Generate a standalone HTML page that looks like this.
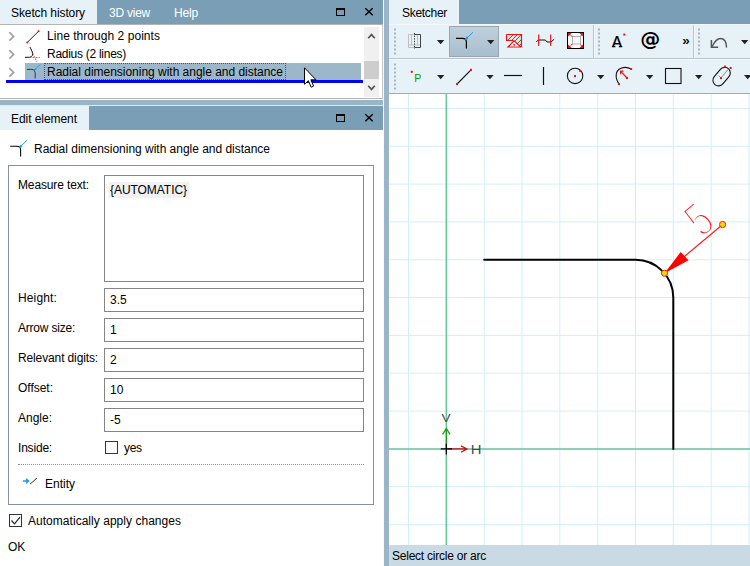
<!DOCTYPE html>
<html><head><meta charset="utf-8"><title>Sketcher</title>
<style>
html,body{margin:0;padding:0;}
body{background:#fff;}
#app{width:750px;height:566px;overflow:hidden;background:#9ab4c8;position:relative;font-family:"Liberation Sans",sans-serif;font-size:12px;}
.t{position:absolute;white-space:nowrap;line-height:16px;font-size:12px;height:16px;}
svg{position:absolute;left:0;top:0;}
</style></head><body><div id="app">
<div style="position:absolute;left:0px;top:0px;width:383px;height:100px;background:#fff;"></div>
<div style="position:absolute;left:0px;top:0px;width:383px;height:24px;background:#7a9eb6;"></div>
<div style="position:absolute;left:0px;top:0px;width:97px;height:24px;background:#e6f1f8;"></div>
<div style="position:absolute;left:0px;top:24px;width:383px;height:1px;background:#b4b4b4;"></div>
<div style="position:absolute;left:0px;top:98px;width:383px;height:1px;background:#b4b4b4;"></div>
<div style="position:absolute;left:382px;top:25px;width:1px;height:73px;background:#c8c8c8;"></div>
<div style="position:absolute;left:25px;top:63px;width:336px;height:17px;background:#9db7ca;"></div>
<div style="position:absolute;left:44px;top:63px;width:242px;height:17px;background:transparent;box-sizing:border-box;border:1px dotted #553;"></div>
<div style="position:absolute;left:6px;top:80px;width:357px;height:3px;background:#0303f3;"></div>
<div style="position:absolute;left:364px;top:27px;width:15px;height:70px;background:#f0f0f0;"></div>
<div style="position:absolute;left:364px;top:61px;width:15px;height:18px;background:#cdcdcd;"></div>
<div style="position:absolute;left:0px;top:105px;width:383px;height:461px;background:#fff;"></div>
<div style="position:absolute;left:0px;top:105px;width:383px;height:1px;background:#dfe8ee;"></div>
<div style="position:absolute;left:0px;top:106px;width:383px;height:24px;background:#7a9eb6;"></div>
<div style="position:absolute;left:0px;top:106px;width:89px;height:24px;background:#e6f1f8;"></div>
<div style="position:absolute;left:383px;top:0px;width:1px;height:566px;background:#f6f8fa;"></div>
<div style="position:absolute;left:8px;top:165px;width:366px;height:340px;background:transparent;box-sizing:border-box;border:1px solid #8a909a;"></div>
<div style="position:absolute;left:104px;top:175px;width:260px;height:107px;background:#fff;box-sizing:border-box;border:1px solid #858585;"></div>
<div style="position:absolute;left:109px;top:182px;width:80px;height:16px;background:#f1f1f1;"></div>
<div style="position:absolute;left:104px;top:288px;width:260px;height:24px;background:#fff;box-sizing:border-box;border:1px solid #858585;"></div>
<div style="position:absolute;left:104px;top:318px;width:260px;height:24px;background:#fff;box-sizing:border-box;border:1px solid #858585;"></div>
<div style="position:absolute;left:104px;top:348px;width:260px;height:24px;background:#fff;box-sizing:border-box;border:1px solid #858585;"></div>
<div style="position:absolute;left:104px;top:378px;width:260px;height:24px;background:#fff;box-sizing:border-box;border:1px solid #858585;"></div>
<div style="position:absolute;left:104px;top:408px;width:260px;height:24px;background:#fff;box-sizing:border-box;border:1px solid #858585;"></div>
<div style="position:absolute;left:105px;top:441px;width:13px;height:13px;background:#fff;box-sizing:border-box;border:1px solid #333;"></div>
<div style="position:absolute;left:18px;top:464px;width:346px;height:1px;background:transparent;border-top:1px dotted #8e8e8e;height:0;"></div>
<div style="position:absolute;left:9px;top:514px;width:13px;height:13px;background:#fff;box-sizing:border-box;border:1px solid #333;"></div>
<div style="position:absolute;left:389px;top:0px;width:361px;height:566px;background:#fff;"></div>
<div style="position:absolute;left:389px;top:0px;width:361px;height:24px;background:#7a9eb6;"></div>
<div style="position:absolute;left:389px;top:0px;width:70px;height:24px;background:#e6f1f8;"></div>
<div style="position:absolute;left:389px;top:24px;width:361px;height:69px;background:#e6f1f8;"></div>
<div style="position:absolute;left:389px;top:58px;width:361px;height:1px;background:#b9c4cc;"></div>
<div style="position:absolute;left:389px;top:59px;width:361px;height:1px;background:#f4f9fc;"></div>
<div style="position:absolute;left:389px;top:24px;width:361px;height:1px;background:#f1f7fb;"></div>
<div style="position:absolute;left:389px;top:93px;width:361px;height:1px;background:#a3a9ad;"></div>
<div style="position:absolute;left:449px;top:26px;width:50px;height:31px;background:linear-gradient(#bfd0db,#a8becd);box-sizing:border-box;border:1px solid #9aa7b0;"></div>
<div style="position:absolute;left:389px;top:545px;width:361px;height:21px;background:#c9dae5;"></div>
<svg width="750" height="566" viewBox="0 0 750 566">
<defs><mask id="thin5" maskUnits="userSpaceOnUse" x="-10" y="-45" width="60" height="60"><text x="0" y="0" font-family="'Liberation Sans', sans-serif" font-size="42" fill="#fff" stroke="#000" stroke-width="2.5">5</text></mask><clipPath id="cv"><rect x="389" y="94" width="361" height="451"/></clipPath></defs>
<g clip-path="url(#cv)">
<line x1="408.5" y1="94" x2="408.5" y2="545" stroke="#d2eff9" stroke-width="1"/>
<line x1="484.2" y1="94" x2="484.2" y2="545" stroke="#d2eff9" stroke-width="1"/>
<line x1="522.0" y1="94" x2="522.0" y2="545" stroke="#d2eff9" stroke-width="1"/>
<line x1="559.8" y1="94" x2="559.8" y2="545" stroke="#d2eff9" stroke-width="1"/>
<line x1="597.7" y1="94" x2="597.7" y2="545" stroke="#d2eff9" stroke-width="1"/>
<line x1="635.5" y1="94" x2="635.5" y2="545" stroke="#d2eff9" stroke-width="1"/>
<line x1="673.3" y1="94" x2="673.3" y2="545" stroke="#d2eff9" stroke-width="1"/>
<line x1="711.2" y1="94" x2="711.2" y2="545" stroke="#d2eff9" stroke-width="1"/>
<line x1="749.0" y1="94" x2="749.0" y2="545" stroke="#d2eff9" stroke-width="1"/>
<line x1="389" y1="108.4" x2="750" y2="108.4" stroke="#d2eff9" stroke-width="1"/>
<line x1="389" y1="146.3" x2="750" y2="146.3" stroke="#d2eff9" stroke-width="1"/>
<line x1="389" y1="184.1" x2="750" y2="184.1" stroke="#d2eff9" stroke-width="1"/>
<line x1="389" y1="221.9" x2="750" y2="221.9" stroke="#d2eff9" stroke-width="1"/>
<line x1="389" y1="259.8" x2="750" y2="259.8" stroke="#d2eff9" stroke-width="1"/>
<line x1="389" y1="297.6" x2="750" y2="297.6" stroke="#d2eff9" stroke-width="1"/>
<line x1="389" y1="335.4" x2="750" y2="335.4" stroke="#d2eff9" stroke-width="1"/>
<line x1="389" y1="373.2" x2="750" y2="373.2" stroke="#d2eff9" stroke-width="1"/>
<line x1="389" y1="411.1" x2="750" y2="411.1" stroke="#d2eff9" stroke-width="1"/>
<line x1="389" y1="486.7" x2="750" y2="486.7" stroke="#d2eff9" stroke-width="1"/>
<line x1="389" y1="524.6" x2="750" y2="524.6" stroke="#d2eff9" stroke-width="1"/>
<line x1="446.35" y1="94" x2="446.35" y2="545" stroke="#62c39c" stroke-width="1.5"/>
<line x1="389" y1="448.9" x2="750" y2="448.9" stroke="#62c39c" stroke-width="1.5"/>
<path d="M484.2 259.8 L635.5 259.8 A37.83 37.83 0 0 1 673.3 297.6 L673.3 448.9" fill="none" stroke="#000" stroke-width="2" stroke-linecap="round"/>
<path d="M446.35 447 V428.5 M442.6 434.3 L446.35 428.5 L450 434.3" fill="none" stroke="#18a018" stroke-width="1.3"/>
<path d="M448 448.9 H467 M461 445.8 L467 448.9 L461 452.2" fill="none" stroke="#c01818" stroke-width="1.3"/>
<path d="M440.8 448.9 H452 M446.35 443.7 V454.4" fill="none" stroke="#000" stroke-width="1.3"/>
<text transform="translate(441.6 422.2) scale(1.2 1)" font-family="'Liberation Sans', sans-serif" font-size="11.4" fill="#4a4a4a">V</text>
<text transform="translate(470.7 453.7) scale(1.2 1)" font-family="'Liberation Sans', sans-serif" font-size="12.4" fill="#4a4a4a">H</text>
<path d="M664.5 273.2 L722.6 224.5" stroke="#ff1a1a" stroke-width="1.2" fill="none"/>
<path d="M664.5 273.2 L680.7 252 L688.5 260.2 Z" fill="#ff0000"/>
<g transform="translate(702 238.4) rotate(-40) scale(0.85 1.16)"><text x="0" y="0" font-family="'Liberation Sans', sans-serif" font-size="42" fill="#ff1010" mask="url(#thin5)">5</text></g>
<circle cx="664.5" cy="273.2" r="3.1" fill="#e6dc00" stroke="#ff1a1a" stroke-width="1"/>
<circle cx="722.6" cy="224.5" r="3.1" fill="#e6dc00" stroke="#ff1a1a" stroke-width="1"/>
</g>
<path d="M9.3 32.199999999999996 L13.6 36.4 L9.3 40.6" fill="none" stroke="#a3a3a3" stroke-width="1.7"/>
<path d="M9.3 50.199999999999996 L13.6 54.4 L9.3 58.6" fill="none" stroke="#a3a3a3" stroke-width="1.7"/>
<path d="M9.3 68.2 L13.6 72.4 L9.3 76.60000000000001" fill="none" stroke="#a3a3a3" stroke-width="1.7"/>
<path d="M27.3 42.4 L38.6 31.2" stroke="#222" stroke-width="1"/><circle cx="27.3" cy="42.4" r="1" fill="#f00"/><circle cx="38.6" cy="31.2" r="1" fill="#f00"/>
<path d="M30 47 L32.3 52 Q33 54 32.3 55.5 M25 57.3 H29.5 Q31.5 57 32.3 55.5" fill="none" stroke="#111" stroke-width="1"/>
<path d="M29.5 57.5 H40 M32.5 53 L37 62" fill="none" stroke="#e33" stroke-width="0.8" stroke-dasharray="2 1"/>
<g transform="translate(27 64.5) scale(0.82)"><path d="M0 6 H6 Q10 6 10 10 V17" fill="none" stroke="#334" stroke-width="1.2"/><path d="M16 0 L9 7" stroke="#1e9be0" stroke-width="1.2" fill="none"/><path d="M8 8 L9.5 4.5 L11.5 6.5 Z" fill="#1e9be0"/></g>
<path d="M368.2 38.3 L371.5 34.6 L374.8 38.3" fill="none" stroke="#555" stroke-width="1.7"/>
<path d="M368.2 85.7 L371.5 89.4 L374.8 85.7" fill="none" stroke="#555" stroke-width="1.7"/>
<rect x="336.5" y="8.5" width="8" height="7" fill="none" stroke="#000" stroke-width="1"/><rect x="336" y="8" width="9" height="2" fill="#000"/>
<path d="M365.3 8.3 L372.7 15.2 M372.7 8.3 L365.3 15.2" stroke="#000" stroke-width="1.4" fill="none"/>
<rect x="336.5" y="114.5" width="8" height="7" fill="none" stroke="#000" stroke-width="1"/><rect x="336" y="114" width="9" height="2" fill="#000"/>
<path d="M365.3 114.3 L372.7 121.2 M372.7 114.3 L365.3 121.2" stroke="#000" stroke-width="1.4" fill="none"/>
<path d="M304.5 67.8 V84.3 L308.3 80.7 L311.2 87.2 L313.6 86.1 L310.8 79.8 H316 Z" fill="#fff" stroke="#000" stroke-width="1" stroke-linejoin="miter"/>
<g transform="translate(10.2 139.9) scale(1)"><path d="M0 6.3 H6.6 Q10.4 6.3 10.4 10 V16.6" fill="none" stroke="#000" stroke-width="1.05"/><path d="M17 0.2 L9.6 7.4" stroke="#1e9be0" stroke-width="1" fill="none"/><path d="M8.8 8.2 L10.2 4.6 L12.4 6.8 Z" fill="#1e9be0"/></g>
<path d="M23 481 H28 M26 478.8 L28.7 481 L26 483.2" fill="none" stroke="#1e9be0" stroke-width="1.4"/><path d="M30 484.2 L37 478" stroke="#333" stroke-width="1"/>
<path d="M11.5 520.5 L14.5 523.8 L20 517.2" fill="none" stroke="#222" stroke-width="1.2"/>
<rect x="394" y="28.5" width="2" height="2" fill="#aab3ba"/><rect x="394" y="32.5" width="2" height="2" fill="#aab3ba"/><rect x="394" y="36.5" width="2" height="2" fill="#aab3ba"/><rect x="394" y="40.5" width="2" height="2" fill="#aab3ba"/><rect x="394" y="44.5" width="2" height="2" fill="#aab3ba"/><rect x="394" y="48.5" width="2" height="2" fill="#aab3ba"/><rect x="394" y="52.5" width="2" height="2" fill="#aab3ba"/>
<rect x="394" y="63.5" width="2" height="2" fill="#aab3ba"/><rect x="394" y="67.5" width="2" height="2" fill="#aab3ba"/><rect x="394" y="71.5" width="2" height="2" fill="#aab3ba"/><rect x="394" y="75.5" width="2" height="2" fill="#aab3ba"/><rect x="394" y="79.5" width="2" height="2" fill="#aab3ba"/><rect x="394" y="83.5" width="2" height="2" fill="#aab3ba"/><rect x="394" y="87.5" width="2" height="2" fill="#aab3ba"/>
<rect x="598" y="28.5" width="2" height="2" fill="#aab3ba"/><rect x="598" y="32.5" width="2" height="2" fill="#aab3ba"/><rect x="598" y="36.5" width="2" height="2" fill="#aab3ba"/><rect x="598" y="40.5" width="2" height="2" fill="#aab3ba"/><rect x="598" y="44.5" width="2" height="2" fill="#aab3ba"/><rect x="598" y="48.5" width="2" height="2" fill="#aab3ba"/><rect x="598" y="52.5" width="2" height="2" fill="#aab3ba"/>
<rect x="698" y="28.5" width="2" height="2" fill="#aab3ba"/><rect x="698" y="32.5" width="2" height="2" fill="#aab3ba"/><rect x="698" y="36.5" width="2" height="2" fill="#aab3ba"/><rect x="698" y="40.5" width="2" height="2" fill="#aab3ba"/><rect x="698" y="44.5" width="2" height="2" fill="#aab3ba"/><rect x="698" y="48.5" width="2" height="2" fill="#aab3ba"/><rect x="698" y="52.5" width="2" height="2" fill="#aab3ba"/>
<line x1="593.5" y1="25" x2="593.5" y2="58" stroke="#b9c4cc"/><line x1="594.5" y1="25" x2="594.5" y2="58" stroke="#f4f9fc"/>
<line x1="693.5" y1="25" x2="693.5" y2="58" stroke="#b9c4cc"/><line x1="694.5" y1="25" x2="694.5" y2="58" stroke="#f4f9fc"/>
<path d="M436.9 40 h7.4 l-3.7 4.2 z" fill="#222"/>
<path d="M487 40 h7.4 l-3.7 4.2 z" fill="#222"/>
<path d="M741 40 h7.4 l-3.7 4.2 z" fill="#222"/>
<path d="M437 75 h7.4 l-3.7 4.2 z" fill="#222"/>
<path d="M486.3 75 h7.4 l-3.7 4.2 z" fill="#222"/>
<path d="M597 75 h7.4 l-3.7 4.2 z" fill="#222"/>
<path d="M646 75 h7.4 l-3.7 4.2 z" fill="#222"/>
<path d="M695 75 h7.4 l-3.7 4.2 z" fill="#222"/>
<path d="M744 75 h7.4 l-3.7 4.2 z" fill="#222"/>
<g fill="none" stroke-width="1"><path d="M408.5 34.5 H414.5 M408.5 34.5 V47.5 H414.5 M411.5 35 V45 M417.5 35 V45 M408.5 45 H420" stroke="#c4bcc4"/><path d="M414.5 34.5 H420.5 V47.5 H414.5" stroke="#444"/><path d="M414.5 33 V49" stroke="#333" stroke-dasharray="1.3 1.3"/></g>
<g transform="translate(456 32) scale(1)"><path d="M0 6.3 H6.6 Q10.4 6.3 10.4 10 V16.6" fill="none" stroke="#000" stroke-width="1.2"/><path d="M17 0.2 L9.6 7.4" stroke="#1e9be0" stroke-width="1" fill="none"/><path d="M8.8 8.2 L10.2 4.6 L12.4 6.8 Z" fill="#1e9be0"/></g>
<g><path d="M506.5 34.5 H521.5 V46 L517.5 46.5 L513.5 40.5 H506.5 Z" fill="#e4e4e4" stroke="none"/><path d="M508 40 L513 35 M511.5 40.5 L517 35 M514.5 41.5 L521 35 M517 44 L521 40 M519.5 45.5 L521.3 43.7" stroke="#444" stroke-width="0.8"/><path d="M506.5 34.5 H521.5 V47 M506.5 34.5 V40.5 H513.5" fill="none" stroke="#f01010" stroke-width="1.2"/><path d="M508 47 L514 40.8 L521 47 Z" fill="#fff" stroke="#f01010" stroke-width="1.2"/><rect x="513.3" y="44" width="1.6" height="1.6" fill="#f01010"/></g>
<g fill="none"><path d="M536.3 41.6 L538.7 40 H545.3 L547 42 H551 L554.2 39.2" stroke="#111" stroke-width="1"/><path d="M538.7 34.6 V45.9 M550.7 34.6 V45.9" stroke="#f01010" stroke-width="1.2"/></g>
<g><rect x="567.5" y="32.5" width="16" height="16" fill="#fff" stroke="#000" stroke-width="1"/><rect x="572.5" y="36.5" width="8" height="7.5" fill="#f8fafa" stroke="#a4acae" stroke-width="0.9"/><path d="M568 33 h3.6 l-3.6 3.6 z M583 33 h-3.6 l3.6 3.6 z M568 48 h3.6 l-3.6 -3.6 z M583 48 h-3.6 l3.6 -3.6 z" fill="#f01010"/><path d="M569.5 34.5 L572.5 36.5 M581.5 34.5 L580.5 36.5 M569.5 46.5 L572.5 44 M581.5 46.5 L580.5 44" stroke="#f01010" stroke-width="1.1" stroke-dasharray="1.4 0.8"/></g>
<text x="612.1" y="47" font-family="'Liberation Mono', monospace" font-size="16.5" fill="#000" stroke="#000" stroke-width="0.2">A</text><path d="M612 46.6 h3.4 M618.8 46.6 h3.4" stroke="#000" stroke-width="1.2"/><rect x="623.3" y="33.6" width="2" height="2" fill="#f01010"/>
<text transform="translate(640.3 46.3) scale(1 1.1)" font-family="'DejaVu Sans', sans-serif" font-weight="bold" font-size="18" textLength="20" lengthAdjust="spacingAndGlyphs" fill="#000">@</text>
<text x="682.2" y="45" font-family="'Liberation Sans', sans-serif" font-weight="bold" font-size="13.5" fill="#111">»</text>
<path d="M711.4 40 V47.3 H718.2" stroke="#555" stroke-width="1.5" fill="none"/><path d="M712 46.6 C714.5 42 717 38.6 720.2 38.6 C724.5 38.6 726.5 42 726.5 47.6" stroke="#555" stroke-width="1.5" fill="none"/>
<rect x="410.8" y="70.8" width="2" height="2" fill="#f01010"/><text x="414.2" y="81.9" font-family="'Liberation Sans', sans-serif" font-size="10.6" fill="#0a960a">P</text>
<path d="M457.1 84 L471 69.8" stroke="#111" stroke-width="1.1"/><rect x="456" y="83" width="2" height="2" fill="#f01010"/><rect x="470" y="68.8" width="2" height="2" fill="#f01010"/>
<path d="M504 75.5 H522" stroke="#111" stroke-width="1.2"/>
<path d="M543.5 67 V85" stroke="#111" stroke-width="1.2"/>
<circle cx="575.1" cy="75.9" r="7.7" fill="none" stroke="#111" stroke-width="1.1"/><rect x="574" y="75" width="2" height="2" fill="#f01010"/><rect x="579.2" y="70" width="2" height="2" fill="#f01010"/>
<path d="M619 84.1 C614.5 77 615.5 70.5 621 68.3 C624 67 628 67.3 631.1 69" fill="none" stroke="#111" stroke-width="1.1"/><path d="M627 78 L620.6 71.2 M620.6 74.2 V71.2 H623.6" stroke="#f01010" stroke-width="1.2" fill="none"/><rect x="618" y="83.1" width="2" height="2" fill="#f01010"/><rect x="630.1" y="68" width="2" height="2" fill="#f01010"/><rect x="626" y="77" width="2" height="2" fill="#f01010"/>
<rect x="665.5" y="68.5" width="15.5" height="15" fill="none" stroke="#111" stroke-width="1.1"/>
<g><rect x="711.2" y="71.0" width="20.8" height="11.2" rx="5.6" ry="5.6" transform="rotate(-50 721.6 76.6)" fill="none" stroke="#111" stroke-width="1.1"/><path d="M721 78 L728.5 69" stroke="#777" stroke-width="0.8"/><path d="M721 78 L718.5 75.5" stroke="#777" stroke-width="0.8"/><rect x="720" y="77" width="2" height="2" fill="#f01010"/><rect x="724" y="65.6" width="2" height="2" fill="#f01010"/><rect x="729.7" y="67" width="2" height="2" fill="#f01010"/></g>
</svg>
<div class="t" style="left:11px;top:5px;color:#000;letter-spacing:-0.098px;">Sketch history</div>
<div class="t" style="left:109px;top:5px;color:#fff;letter-spacing:-0.241px;">3D view</div>
<div class="t" style="left:174px;top:5px;color:#fff;letter-spacing:-0.172px;">Help</div>
<div class="t" style="left:47px;top:28px;color:#000;letter-spacing:0.043px;">Line through 2 points</div>
<div class="t" style="left:47px;top:46px;color:#000;letter-spacing:-0.273px;">Radius (2 lines)</div>
<div class="t" style="left:47px;top:64px;color:#000;letter-spacing:-0.019px;">Radial dimensioning with angle and distance</div>
<div class="t" style="left:11px;top:111px;color:#000;letter-spacing:-0.059px;">Edit element</div>
<div class="t" style="left:34px;top:141px;color:#000;letter-spacing:-0.019px;">Radial dimensioning with angle and distance</div>
<div class="t" style="left:18px;top:177px;color:#000;letter-spacing:-0.131px;">Measure text:</div>
<div class="t" style="left:110px;top:182px;color:#000;letter-spacing:-0.053px;">{AUTOMATIC}</div>
<div class="t" style="left:18px;top:290px;color:#000;letter-spacing:0.138px;">Height:</div>
<div class="t" style="left:110px;top:292px;color:#000;letter-spacing:0px;">3.5</div>
<div class="t" style="left:18px;top:320px;color:#000;letter-spacing:-0.213px;">Arrow size:</div>
<div class="t" style="left:110px;top:322px;color:#000;letter-spacing:0px;">1</div>
<div class="t" style="left:18px;top:350px;color:#000;letter-spacing:-0.128px;">Relevant digits:</div>
<div class="t" style="left:110px;top:352px;color:#000;letter-spacing:0px;">2</div>
<div class="t" style="left:18px;top:380px;color:#000;letter-spacing:-0.02px;">Offset:</div>
<div class="t" style="left:110px;top:382px;color:#000;letter-spacing:0px;">10</div>
<div class="t" style="left:18px;top:410px;color:#000;letter-spacing:-0.005px;">Angle:</div>
<div class="t" style="left:110px;top:412px;color:#000;letter-spacing:0px;">-5</div>
<div class="t" style="left:18px;top:440px;color:#000;letter-spacing:-0.194px;">Inside:</div>
<div class="t" style="left:124px;top:440px;color:#000;letter-spacing:-0.3px;">yes</div>
<div class="t" style="left:45px;top:476px;color:#000;letter-spacing:-0.003px;">Entity</div>
<div class="t" style="left:28px;top:513px;color:#000;letter-spacing:0.034px;">Automatically apply changes</div>
<div class="t" style="left:8px;top:539px;color:#000;letter-spacing:0px;">OK</div>
<div class="t" style="left:402px;top:5px;color:#000;letter-spacing:-0.295px;">Sketcher</div>
<div class="t" style="left:392px;top:548px;color:#000;letter-spacing:-0.235px;">Select circle or arc</div>
</div></body></html>
